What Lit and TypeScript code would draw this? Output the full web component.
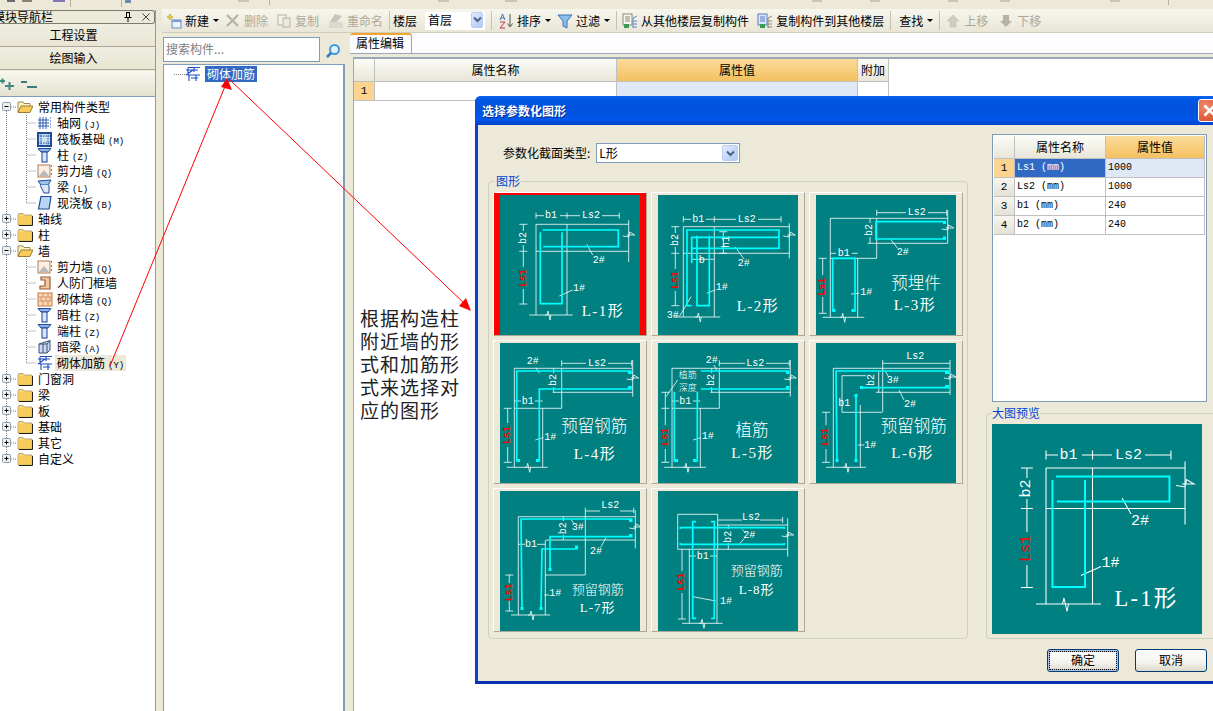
import { LitElement, html, svg, css } from 'lit';
import { customElement } from 'lit/decorators.js';

// --- diagrams: every figure is 140x140, coordinates read off the reference ---

type Txt = [number, number, string, string?];
interface Fig {
  w: string;
  c: string;
  t: Txt[];
  e?: Array<[number, number]>; // square rebar ends
}

const brkH = (x: number, y: number) => `M${x - 3} ${y}L${x - 1} ${y}L${x} ${y - 4}L${x + 2} ${y + 5}L${x + 3} ${y}`;
const brkV = (x: number, y: number) => `M${x - 6} ${y + 1}L${x} ${y + 2}L${x + 1} ${y - 3}L${x + 6} ${y}L${x - 2} ${y}`;
const tick = (x: number, y: number) => `M${x - 4} ${y}H${x + 4}`;
const vtick = (x: number, y: number) => `M${x} ${y - 3}V${y + 3}`;

const figs: Fig[] = [
  {
    w: `M36 20.7H44M60 20.7H80M102 20.7H119.3${vtick(36, 20.7)}${vtick(67, 20.7)}${vtick(119.3, 20.7)}
      M36 29.3H128.7M36 56.3H128.7M36 29.3V120M67 29.3V120M29.3 120H72.7${brkH(48, 120)}
      M128.7 25V67${brkV(128.7, 40)}M23.3 29.3V36M23.3 50V72M23.3 94V109
      ${tick(23.3, 29.3)}${tick(23.3, 56.3)}${tick(23.3, 109)}
      M86.7 49.3L92.7 60M59.3 101L72.7 95`,
    c: 'M42.7 35H118.3V51.7H43.3M40.3 37.3V108.7H62V37.3',
    t: [[51, 20.7, 'b1'], [91, 20.7, 'Ls2'], [23.3, 43, 'b2', 'r'], [23.3, 83, 'Ls1', 'R'], [98.7, 65, '2#'], [79, 93, '1#'], [81.7, 121, 'L-1形', 'lab']],
  },
  {
    w: `M25.3 24.3H33M48 24.3H78M100 24.3H123${vtick(25.3, 24.3)}${vtick(56.3, 24.3)}${vtick(123, 24.3)}
      M25.3 31.7H131.3M25.3 58.3H131.3M25.3 31.7V122M56.3 31.7V122M16.3 122H62.3${brkH(40.3, 122)}
      M131.3 28.3V63.3${brkV(131.3, 40)}M17.3 31.7V38M17.3 52V74M17.3 96V110.7
      ${tick(17.3, 31.7)}${tick(17.3, 58.3)}${tick(17.3, 110.7)}
      M65.3 36.7V58.3${tick(65.3, 36.7)}${tick(65.3, 58.3)}M33.7 64.3H56.3
      M77 51.7L86.3 64.3M48.7 98.3L57.3 95M21.3 121.7L33 101.7`,
    c: 'M33.7 110.7H29V35H121V42.3H33.7V68M39 40.7V110.7H51.3V40.7M33.7 53.3H121V43.6',
    t: [[40.3, 24.3, 'b1'], [88.7, 24.3, 'Ls2'], [17.3, 45, 'b2', 'r'], [17.3, 85, 'Ls1', 'R'], [68, 47, 'h1', 'r'], [43.7, 65, 'b'], [85.7, 68.3, '2#'], [63.7, 92.3, '1#'], [14.7, 120.3, '3#'], [78.7, 116, 'L-2形', 'lab']],
  },
  {
    w: `M60.7 17.7H90M112 17.7H130.7${vtick(60.7, 17.7)}${vtick(130.7, 17.7)}
      M14.3 23.3H131.7M14.3 23.3V122.3M60.7 23.3V63.3M14.3 63.3H60.7M51.7 48.3H131.7M41.7 63.3V122.3
      M6.7 122.3H48.3${brkH(26.7, 122.3)}M131.7 15V48.3${brkV(131.7, 33)}
      M54 23.3V28M54 42V48.3M14.3 58.3H20M36 58.3H41.7
      M6.7 63.3V80M6.7 102V118.3${tick(6.7, 63.3)}${tick(6.7, 118.3)}
      M74.3 44L81.7 53.3M35 99L43.3 98.3`,
    c: 'M130 26.7H60V44H130M18.3 116H16.7V63.3H39V116H37',
    t: [[100.7, 17.7, 'Ls2'], [53, 35, 'b2', 'r'], [27.7, 58.3, 'b1'], [6.7, 91.7, 'Ls1', 'R'], [86.7, 57.7, '2#'], [50.3, 97.3, '1#'], [100, 86.7, '预埋件', 'cn'], [99, 110, 'L-3形', 'mid']],
    e: [[16.5, 114], [35.5, 114], [127, 26], [127, 41.5]],
  },
  {
    w: `M61.7 20.3H86M108 20.3H131.7${vtick(61.7, 20.3)}${vtick(131.7, 20.3)}
      M14.3 25.3H132.7M14.3 25.3V124.3M61.7 25.3V65.3M14.3 65.3H61.7M42.7 65.3V124.3M52.7 49.3H132.7
      M6.7 124.3H47.7${brkH(27.7, 124.3)}M132.7 17V53.7${brkV(132.7, 35)}
      M53.7 25.3V30M53.7 44V49.3M14.3 58H21M35 58H42.7
      M7.7 65.3V80M7.7 104V119.3${tick(7.7, 65.3)}${tick(7.7, 119.3)}
      M36 24.7L39.3 30.3M35.3 97L43.3 94.7`,
    c: 'M18.7 118H16.7V28H131V31M37.7 118H39.3V46H131V43',
    t: [[97, 20.3, 'Ls2'], [32.7, 18.7, '2#'], [53.7, 37, 'b2', 'r'], [27.7, 58, 'b1'], [7.7, 92, 'Ls1', 'R'], [50.3, 94.3, '1#'], [94.3, 82, '预留钢筋', 'cn'], [95, 111.3, 'L-4形', 'mid']],
    e: [[17, 116], [36, 116], [128, 28], [128, 43]],
  },
  {
    w: `M61.3 20.3H87M108 20.3H131.3${vtick(61.3, 20.3)}${vtick(131.3, 20.3)}
      M14 25.3H132.3M14 25.3V124.3M61.3 25.3V65.3M14 65.3H61.3M42.3 65.3V124.3M52.3 49.3H132.3
      M6.3 124.3H48${brkH(28, 124.3)}M132.3 17V53.7${brkV(132.3, 35)}
      M53.7 25.3V30M53.7 44V49.3M14 58H21M35 58H42.3
      M7.3 49.3V82M7.3 106V119.3${tick(7.3, 49.3)}${tick(7.3, 65.3)}${tick(7.3, 119.3)}
      M8 53.7L19.7 37M56 22L59 28M35 97L43 94.7`,
    c: 'M16.3 48.7V118H19.7M39.3 48.7V118H35.3M43 28H130.7V31M43 46H130.7V43',
    t: [[97.3, 20.3, 'Ls2'], [53.7, 17, '2#'], [53.7, 37, 'b2', 'r'], [27.3, 58, 'b1'], [7.3, 93.7, 'Ls1', 'R'], [49.7, 93.7, '1#'], [29.7, 31.5, '植筋', 'sm'], [29.7, 44.5, '深度', 'sm'], [94, 86.3, '植筋', 'cn'], [94.7, 110.3, 'L-5形', 'mid']],
    e: [[17, 116], [35, 116], [128, 28], [128, 43]],
  },
  {
    w: `M66.7 20.3H134M66.7 17V69.3M134 17V52${brkV(134, 34)}
      M17.3 25.3H134M17.3 25.3V124.3M26 32.7V69.3H66M26 32.7H50M44.3 62V124.3M60 49.3H134
      M10 124.3H50${brkH(30, 124.3)}M62.7 28.7V49.3
      M10 69.3V82M10 106V119.3${tick(10, 69.3)}${tick(10, 119.3)}
      M69.3 28L72.7 34M83 47L88 57M41.7 102H48.3`,
    c: 'M21 118.7L20 28H132.3V31M45.7 44.7H132.3V42M40 52.7V118.7',
    t: [[99.3, 13, 'Ls2'], [55, 37, 'b2', 'r'], [28.3, 60.3, 'b1'], [76.7, 37, '3#'], [94, 61, '2#'], [10, 93.7, 'Ls1', 'R'], [54.3, 102, '1#'], [97.7, 82, '预留钢筋', 'cn'], [96.7, 110.3, 'L-6形', 'mid']],
    e: [[19.5, 116], [38.5, 116], [38.5, 51], [44, 43], [129, 28], [129, 42]],
  },
  {
    w: `M85.3 20H100M120 20H133.7M85.3 16.7V84M133.7 16.7V22
      M18.3 25.7H135.3M18.3 25.7V124M46 49H135.3M45.3 49V124M45.3 84H85.3
      M11 124H50.3${brkH(31, 124)}M135.3 19V57.3${brkV(135.3, 36)}
      M63.3 25.7V30M63.3 44V49M18.3 53.3H25M37 53.3H45.3
      M9.3 84V92M9.3 110V120${tick(9.3, 84)}${tick(9.3, 120)}
      M71 28.3L74.3 33.3M106 46.7L101 55.7M44.3 104H49.3`,
    c: 'M22 118L21 28H131.7V31M41 118L42 58H76.7V55M50 79V45.7H131.7V43',
    t: [[110.3, 14, 'Ls2'], [63.3, 37.3, 'b2', 'r'], [77.7, 36.7, '3#'], [31, 53.3, 'b1'], [96, 60.7, '2#'], [9.3, 101.3, 'Ls1', 'R'], [55.3, 102.3, '1#'], [97.7, 97.3, '预留钢筋', 'cn14'], [97.7, 116.7, 'L-7形', 'mid14']],
    e: [[20.5, 116], [39.5, 116], [48.5, 77], [75, 54.5], [129, 28], [129, 43]],
  },
  {
    w: `M19.7 23.3H59.7V58.3H19.7ZM59.7 58.3H129.7M59.7 34H129.7M59.7 29H84M102 29H124.7${vtick(124.7, 29)}
      M31.3 58.3V132.3M59 58.3V132.3M24 132.3H64.7${brkH(44, 132.3)}M129.7 27.3V65.7${brkV(129.7, 44)}
      M70.3 34V38M70.3 52V58.3M31.3 65H38M52 65H59
      M24 58.3V80M24 102V128${tick(24, 128)}
      M84 38.3L88 42.3M80.7 54L86.3 47.3M34.7 105.7L58 110`,
    c: 'M38 30.7H34.7V127.3H38M53 30.7H56.3V127.3H53M22.3 38V36.7H126.3V38M22.3 52V53.3H126.3V52',
    t: [[93, 26.7, 'Ls2'], [70.3, 45.7, 'b2', 'r'], [91.3, 44.7, '2#'], [44.7, 65, 'b1'], [24, 90.7, 'Ls1', 'R'], [68, 110, '1#'], [98.7, 78.3, '预留钢筋', 'cn14'], [98.7, 98, 'L-8形', 'mid14']],
  },
];

const drawFig = (f: Fig, cls = 'fig') => html`<svg class=${cls} viewBox="0 0 140 140">
  <rect width="140" height="140" fill="#008080"></rect>
  <path class="wl" d=${f.w}></path>
  <path class="cy" d=${f.c}></path>
  ${(f.e ?? []).map(([x, y]) => svg`<rect x=${x} y=${y} width="3" height="3" fill="#0ff"></rect>`)}
  ${f.t.map(([x, y, s, k]) =>
    k === 'r' || k === 'R'
      ? svg`<text class=${k === 'R' ? 'dim red' : 'dim'} x=${x} y=${y} transform="rotate(-90 ${x} ${y})">${s}</text>`
      : svg`<text class=${k ?? 'dim'} x=${x} y=${y}>${s}</text>`,
  )}
</svg>`;

// --- icons ---

const ic = (body: unknown) => html`<svg class="ic" viewBox="0 0 16 16">${body}</svg>`;
const folder = ic(svg`<path d="M1 4L2 2.500H6L7.500 4H15V14H1Z" fill="#f7d774" stroke="#9a8a55" stroke-width=".7"></path><rect x="1.500" y="5" width="13" height="8.500" fill="#f6cd5b"></rect><path d="M15.500 5V14.500H2" stroke="#222" fill="none"></path>`);
const folderOpen = ic(svg`<path d="M1 13V3H6L7 4.500H13V7" fill="#fff3c4" stroke="#9a8a55"></path><path d="M1 13.500L4 7H16L13 13.500Z" fill="#f6cd5b" stroke="#9a7a35"></path>`);
const gridIc = ic(svg`<path d="M1 5H12M1 8H12M1 11H12M3 2V14M6 2V14M9 2V14" stroke="#2a5bb0" fill="none"></path><path d="M13 3h2M13 6h2M13 9h2M13 12h2" stroke="#2a5bb0" stroke-dasharray="1 1"></path>`);
const raftIc = ic(svg`<rect x="1" y="2" width="13" height="13" fill="#cfe0f5" stroke="#1c4c96" stroke-width="2"></rect><path d="M1 5H14M1 12H14M4 2V15M11 2V15" stroke="#1c4c96" stroke-dasharray="1.500 1"></path>`);
const colIc = ic(svg`<path d="M1 1.500H14L11 5H4Z" fill="#8fb0e8" stroke="#1c4c96"></path><rect x="5" y="5" width="5" height="10" fill="#dbe6f8" stroke="#1c3c96"></rect>`);
const shearIc = ic(svg`<rect x="1" y="2" width="12" height="12" fill="#fbeee4" stroke="#b07a50"></rect><path d="M2 13L7 7L12 13Z" fill="#b9b9b9"></path><path d="M14.500 2V14" stroke="#e07010" stroke-dasharray="2 2"></path>`);
const beamIc = ic(svg`<path d="M1 2L14 1L11 6H4Z" fill="#9cc4ec" stroke="#1c4c96"></path><path d="M3 6L7 14H12V6" fill="#dbe6f8" stroke="#1c4c96"></path>`);
const slabIc = ic(svg`<path d="M4 1.500H14L12 14H1.500Z" fill="#b8d4f6" stroke="#1c4c96" stroke-width="1.200"></path>`);
const doorIc = ic(svg`<path d="M4 2H13V14H3V11H8V5H4Z" fill="#eec9a5" stroke="#9a5a30" stroke-width="1.200"></path>`);
const brickIc = ic(svg`<rect x="1" y="2" width="14" height="13" fill="#f8d8b8" stroke="#c87a40"></rect><path d="M1 6H15M1 10H15M6 2V6M11 2V6M4 6V10M9 6V10M13 6V10M6 10V15M11 10V15" stroke="#d89060" fill="none"></path>`);
const hidIc = ic(svg`<path d="M2 5L13 1.500V11L10 14H2Z" fill="#cfdcec" stroke="#38507a"></path><path d="M2 5H10V14M10 5L13 1.500M6 5V14" stroke="#38507a" fill="none"></path>`);
const rebarIc = ic(svg`<path d="M3 1.500H15M3 1.500V9H15M9 1.500V6M1 4H13M4 9V15M11 9V15M6 12H13M1 9L8 4" stroke="#1c4cc6" fill="none" stroke-width="1.100"></path>`);

const tbNew = ic(svg`<path d="M4 1L5 3L7 4L5 5L4 7L3 5L1 4L3 3Z" fill="#f0c840" stroke="#b08a20" stroke-width=".5"></path><rect x="6" y="7" width="9" height="8" fill="#eef3fb" stroke="#6a8cc0"></rect><rect x="6" y="7" width="9" height="2" fill="#7a9cd0"></rect>`);
const tbDel = ic(svg`<path d="M2 2L13 13M13 2L2 13" stroke="#b5b2a2" stroke-width="2.200"></path>`);
const tbCopy = ic(svg`<rect x="2" y="2" width="8" height="10" fill="#f4f3ea" stroke="#b5b2a2"></rect><rect x="7" y="5" width="7" height="9" fill="#ebe9dc" stroke="#b5b2a2"></rect>`);
const tbRename = ic(svg`<path d="M7 1L14 3L6 12L2 9Z" fill="#c8c6b8"></path><rect x="1" y="9" width="14" height="6" fill="#dcdacc"></rect>`);
const tbSort = ic(svg`<path d="M12 1V13M9.500 10.500L12 14L14.500 10.500" stroke="#555" fill="none"></path><path d="M2 7L4.500 1L7 7M3 5H6" stroke="#4a70b8" fill="none"></path><path d="M2 9H7L2 15H7" stroke="#b04040" fill="none"></path>`);
const tbFilter = ic(svg`<path d="M1 2H15L10 8V15L6 13V8Z" fill="#8cc0ec" stroke="#3a70b0"></path>`);
const tbCopyFrom = ic(svg`<rect x="1" y="1" width="9" height="11" fill="#f8f8f0" stroke="#88887a"></rect><path d="M3 4H8M3 6H8M3 8H8" stroke="#88887a"></path><rect x="2" y="11" width="5" height="4" fill="#3a9a50"></rect><path d="M11 5L15 3M11 8H15M11 11H15M11 14H15M11 5V15" stroke="#5a8ad0" fill="none"></path>`);
const tbCopyTo = ic(svg`<rect x="1" y="1" width="9" height="11" fill="#dce8fb" stroke="#5a7ac0"></rect><path d="M3 4H8M3 6H8M3 8H8" stroke="#5a7ac0"></path><rect x="3" y="11" width="5" height="4" fill="#3a9a50"></rect><path d="M11 5L15 3M11 8H15M11 11H15M11 14H15M11 5V15" stroke="#88887a" fill="none"></path>`);
const tbUp = ic(svg`<path d="M8 2L14 8H11V14H5V8H2Z" fill="#cfcdbf" stroke="#bdbbac" stroke-width=".5"></path>`);
const tbDown = ic(svg`<path d="M8 14L14 8H11V2H5V8H2Z" fill="#b5b3a4"></path>`);
const chevron = html`<svg class="chev" viewBox="0 0 9 7"><path d="M1 1.500L4.500 5L8 1.500" fill="none" stroke="#4d6185" stroke-width="2"></path></svg>`;

interface Node {
  label: string;
  key?: string;
  icon: unknown;
  kid?: boolean;
  open?: boolean;
  tail?: boolean; // last child of its parent
  hot?: boolean;
}

const tree: Node[] = [
  { label: '常用构件类型', icon: folderOpen, open: true },
  { label: '轴网', key: '(J)', icon: gridIc, kid: true },
  { label: '筏板基础', key: '(M)', icon: raftIc, kid: true },
  { label: '柱', key: '(Z)', icon: colIc, kid: true },
  { label: '剪力墙', key: '(Q)', icon: shearIc, kid: true },
  { label: '梁', key: '(L)', icon: beamIc, kid: true },
  { label: '现浇板', key: '(B)', icon: slabIc, kid: true, tail: true },
  { label: '轴线', icon: folder },
  { label: '柱', icon: folder },
  { label: '墙', icon: folderOpen, open: true },
  { label: '剪力墙', key: '(Q)', icon: shearIc, kid: true },
  { label: '人防门框墙', icon: doorIc, kid: true },
  { label: '砌体墙', key: '(Q)', icon: brickIc, kid: true },
  { label: '暗柱', key: '(Z)', icon: colIc, kid: true },
  { label: '端柱', key: '(Z)', icon: colIc, kid: true },
  { label: '暗梁', key: '(A)', icon: hidIc, kid: true },
  { label: '砌体加筋', key: '(Y)', icon: rebarIc, kid: true, tail: true, hot: true },
  { label: '门窗洞', icon: folder },
  { label: '梁', icon: folder },
  { label: '板', icon: folder },
  { label: '基础', icon: folder },
  { label: '其它', icon: folder },
  { label: '自定义', icon: folder },
];

const connector = (n: Node, i: number) => {
  if (n.kid) {
    return html`<svg class="conn kid" viewBox="0 0 37 16">
      <path d="M6.500 0V16" class="dot"></path>
      <path d=${n.tail ? 'M26.500 0V8H36' : 'M26.500 0V16M26.500 8H36'} class="dot"></path>
    </svg>`;
  }
  const first = i === 0;
  const last = i === tree.length - 1;
  return html`<svg class="conn" viewBox="0 0 17 16">
    <path d=${`${first ? '' : 'M6.500 0V3'}${last ? '' : 'M6.500 12V16'}M11 8H17`} class="dot"></path>
    <rect x="2.500" y="3.500" width="8" height="8" rx="1" fill="#f1efe4" stroke="#8aa0ba"></rect>
    <path d=${n.open ? 'M4.500 7.500H8.500' : 'M4.500 7.500H8.500M6.500 5.500V9.500'} stroke="#000"></path>
  </svg>`;
};

@customElement('app-root')
export class AppRoot extends LitElement {
  static styles = css`
    :host {
      display: block;
      position: relative;
      width: 1213px;
      height: 711px;
      overflow: hidden;
      background: #ece9d8;
      font: 12px/16px "Noto Sans CJK SC", "Liberation Sans", sans-serif;
      color: #000;
    }
    .k {
      font-family: "Liberation Mono", monospace;
      font-size: 9px;
      margin-left: 3px;
    }
    .ic {
      width: 16px;
      height: 16px;
      flex: none;
      display: block;
    }
    .strip {
      display: block;
      width: 1213px;
      height: 10px;
    }
    .main {
      display: flex;
      height: 701px;
    }

    /* left navigation */
    .nav {
      width: 155px;
      flex: none;
      display: flex;
      flex-direction: column;
      border-right: 1px solid #7f9db9;
    }
    .nav-title {
      height: 12px;
      flex: none;
      display: flex;
      align-items: center;
      border: 1px solid #7b7b6f;
      border-left: 0;
      border-radius: 0 3px 3px 0;
      overflow: hidden;
      line-height: 12px;
    }
    .nav-title b {
      font-weight: 400;
      margin-left: -7px;
      flex: 1;
    }
    .pin {
      width: 8px;
      height: 10px;
      margin-right: 10px;
    }
    .cross {
      width: 8px;
      height: 8px;
      margin-right: 4px;
    }
    .nav-btn {
      height: 22px;
      flex: none;
      display: flex;
      align-items: center;
      justify-content: center;
      background: linear-gradient(#f0eee1, #e8e5d3);
      border-bottom: 1px solid #aca899;
      padding-right: 8px;
    }
    .nav-tools {
      height: 25px;
      margin-top: 1px;
      flex: none;
      display: flex;
      align-items: center;
      gap: 5px;
      background: linear-gradient(#f8f7ef, #e5e2d0);
      border-bottom: 1px solid #7f9db9;
    }
    .nav-tools svg {
      width: 16px;
      height: 12px;
    }
    .tree {
      flex: 1;
      background: #fff;
      padding-top: 2px;
    }
    .row {
      height: 16px;
      display: flex;
      align-items: center;
    }
    .conn {
      width: 17px;
      height: 16px;
      flex: none;
    }
    .conn.kid {
      width: 37px;
    }
    .dot {
      fill: none;
      stroke: #808080;
      stroke-dasharray: 1 1;
    }
    .name {
      margin-left: 3px;
      padding: 0 2px;
      height: 16px;
      white-space: nowrap;
    }
    .row.kid .name {
      margin-left: 2px;
    }
    .name.hot {
      background: #ece9d8;
    }

    /* work area */
    .work {
      flex: 1;
      display: flex;
      flex-direction: column;
      padding-left: 6px;
      min-width: 0;
    }
    .toolbar {
      height: 24px;
      box-sizing: border-box;
      flex: none;
      display: flex;
      align-items: center;
      margin-top: -1px;
      padding-left: 1px;
      background: linear-gradient(#f7f6ee, #e9e6d6);
      border-bottom: 1px solid #cfccba;
      white-space: nowrap;
    }
    .tb {
      display: flex;
      align-items: center;
      gap: 3px;
      padding: 0 3px;
    }
    .tb.off {
      color: #aca899;
    }
    .tb.up1 {
      margin-left: -1px;
    }
    .tb.mv2 {
      margin-left: 2px;
    }
    .tb.mv3 {
      margin-left: 3px;
    }
    .tb.mv4 {
      margin-left: 4px;
    }
    .caret {
      width: 0;
      height: 0;
      margin-left: 1px;
      border: 3px solid transparent;
      border-top-color: #000;
      border-bottom: 0;
    }
    .sep {
      width: 1px;
      height: 19px;
      background: #c5c2b0;
      margin: 0 3px;
    }
    .floor {
      width: 60px;
      height: 18px;
      margin: 0 3px 0 8px;
      display: flex;
      align-items: center;
      justify-content: space-between;
      background: #fff;
      padding: 0 2px 2px 3px;
      box-sizing: border-box;
    }
    .dd {
      width: 12px;
      height: 16px;
      display: flex;
      align-items: center;
      justify-content: center;
      background: linear-gradient(135deg, #e1eafe, #aec8f7);
      border-radius: 2px;
      border: 1px solid #b9cdf5;
      box-sizing: border-box;
    }
    .chev {
      width: 9px;
      height: 7px;
    }
    .panes {
      flex: 1;
      display: flex;
      min-height: 0;
    }

    /* component list */
    .list-pane {
      width: 182px;
      flex: none;
      padding-left: 1px;
      display: flex;
      flex-direction: column;
    }
    .search {
      height: 23px;
      margin-top: 6px;
      flex: none;
      display: flex;
      align-items: center;
    }
    .search .box {
      width: 153px;
      height: 21px;
      padding: 0 0 2px 2px;
      box-sizing: content-box;
      display: flex;
      align-items: center;
      color: #808080;
      background: #fff;
      border: 1px solid #7f9db9;
      margin-top: -2px;
    }
    .lens {
      width: 16px;
      height: 16px;
      margin-left: 5px;
    }
    .list {
      flex: 1;
      margin-top: 2px;
      background: #fff;
      border: 1px solid #7f9db9;
      border-width: 1px 2px 0 1px;
      padding-top: 1px;
    }
    .item {
      display: flex;
      align-items: center;
      height: 16px;
      padding-left: 10px;
    }
    .item .lead {
      width: 11px;
      border-top: 1px dotted #808080;
    }
    .item .sel {
      margin-left: 4px;
      padding: 0 2px;
      background: #316ac5;
      color: #fff;
    }

    /* property pane */
    .props {
      flex: 1;
      margin-left: 5px;
      display: flex;
      flex-direction: column;
      min-width: 0;
    }
    .tabs {
      height: 20px;
      flex: none;
      background: #fdfdff;
      border-bottom: 1px solid #9aa8b9;
    }
    .tab {
      width: 62px;
      height: 20px;
      box-sizing: border-box;
      padding-left: 6px;
      border-top: 2px solid #f2a530;
      border-right: 1px solid #9aa8b9;
      border-radius: 3px 3px 0 0;
      line-height: 15px;
      background: #fdfdff;
    }
    .prop-body {
      flex: 1;
      padding: 3px 0 0 3px;
    }
    .prop-grid {
      height: 100%;
      background: #fff;
      border-top: 2px solid #9aa8b9;
      border-left: 1px solid #9aa8b9;
    }

    /* shared grid */
    .pg {
      display: grid;
    }
    .pg.big {
      grid-template-columns: 21px 242px 241px 31px;
      grid-template-rows: 23px 19px;
      width: 535px;
    }
    .pg.small {
      grid-template-columns: 21px 91px 99px;
      grid-template-rows: 23px repeat(4, 19px);
      width: 211px;
    }
    .pg > div {
      box-sizing: border-box;
      display: flex;
      align-items: center;
      border-right: 1px solid #c0c0c0;
      border-bottom: 1px solid #c0c0c0;
      padding-left: 2px;
      white-space: nowrap;
    }
    .pg .h {
      justify-content: center;
      padding: 0;
      background: linear-gradient(#fcfcf8, #e8e6d9);
    }
    .pg .h.on {
      background: linear-gradient(#fbdc9c, #f3c05f);
    }
    .pg .n {
      justify-content: center;
      padding: 0;
      background: linear-gradient(#f7f6ef, #e4e2d4);
      font-family: "Liberation Mono", monospace;
      font-size: 11px;
    }
    .pg .n.on {
      background: #fdd48f;
    }
    .pg .v {
      font-family: "Liberation Mono", monospace;
      font-size: 10px;
    }
    .pg .s {
      background: #316ac5;
      color: #fff;
    }
    .pg .a {
      background: #e0e8f5;
    }

    /* annotation text and arrows lie over the panes */
    .note {
      position: absolute;
      left: 360px;
      top: 306px;
      width: 100px;
      font-size: 19px;
      line-height: 23px;
      letter-spacing: 1px;
      color: #222;
    }
    .arrows {
      position: absolute;
      left: 0;
      top: 0;
      width: 1213px;
      height: 711px;
      pointer-events: none;
    }

    /* dialog */
    .dlg {
      position: absolute;
      left: 475px;
      top: 96px;
      width: 744px;
      height: 588px;
      box-sizing: border-box;
      display: flex;
      flex-direction: column;
      background: #ece9d8;
      border: 3px solid #0a40d0;
      border-top: 0;
      border-bottom-color: #0832b0;
      border-radius: 6px 6px 0 0;
    }
    .dlg-title {
      height: 29px;
      flex: none;
      margin: 0 -3px;
      padding: 0 0 0 7px;
      display: flex;
      align-items: center;
      justify-content: space-between;
      color: #fff;
      font-weight: 700;
      font-size: 12px;
      text-shadow: 1px 1px 0 #0a2a90;
      border-radius: 6px 6px 0 0;
      background: linear-gradient(#0a64ec 0, #0058e4 12%, #0050dc 45%, #0058ea 80%, #0040cc 100%);
    }
    .close {
      width: 21px;
      height: 21px;
      margin-right: -2px;
      border: 1px solid #fff;
      border-radius: 3px;
      background: radial-gradient(circle at 30% 30%, #ef8a70, #d6421c);
    }
    .close svg {
      display: block;
      width: 21px;
      height: 21px;
    }
    .dlg-main {
      flex: 1;
      display: flex;
      min-height: 0;
    }
    .dlg-left {
      width: 480px;
      margin-left: 10px;
      flex: none;
    }
    .dlg-form {
      display: flex;
      align-items: center;
      height: 20px;
      margin: 18px 0 12px 15px;
    }
    .combo {
      width: 144px;
      height: 20px;
      box-sizing: border-box;
      margin-left: 6px;
      padding: 0 1px 0 2px;
      display: flex;
      align-items: center;
      justify-content: space-between;
      background: #fff;
      border: 1px solid #7f9db9;
    }
    .combo .dd {
      width: 16px;
    }
    fieldset {
      margin: 0;
      padding: 0;
      min-width: 0;
      box-sizing: border-box;
      border: 1px solid #d0d0bf;
      border-radius: 4px;
    }
    legend {
      margin-left: 6px;
      padding: 0 1px;
      color: #0046d5;
      line-height: 12px;
    }
    .shapes {
      height: 464px;
      box-sizing: border-box;
    }
    .tiles {
      display: grid;
      grid-template-columns: repeat(3, 154px);
      grid-auto-rows: 144px;
      gap: 4px;
      padding: 5px 0 0 4px;
    }
    .tile {
      box-sizing: border-box;
      padding: 2px 6px 0;
      border: 1px solid;
      border-color: #fff #aca899 #aca899 #fff;
      overflow: hidden;
    }
    .tile.on {
      background: #f00;
    }
    .fig {
      display: block;
      width: 140px;
      height: 140px;
    }
    .bigfig {
      display: block;
      width: 210px;
      height: 210px;
    }
    .wl {
      fill: none;
      stroke: #fff;
      stroke-width: 0.8;
    }
    .cy {
      fill: none;
      stroke: #0ff;
      stroke-width: 1.700;
    }
    .bigfig .wl {
      stroke-width: 0.7;
    }
    .bigfig .cy {
      stroke-width: 1.300;
    }
    text {
      fill: #fff;
      font-family: "Liberation Mono", monospace;
    }
    .dim {
      font-size: 10px;
      text-anchor: middle;
      dominant-baseline: central;
    }
    .dim.red {
      fill: #f00;
      font-weight: 700;
    }
    .bigfig .dim.red {
      font-weight: 400;
    }
    .lab {
      font-family: "Liberation Serif", "Noto Sans CJK SC", serif;
      font-size: 15px;
      letter-spacing: 1.500px;
    }
    .mid,
    .mid14 {
      font-family: "Liberation Serif", "Noto Sans CJK SC", serif;
      font-size: 15px;
      letter-spacing: 1.500px;
      text-anchor: middle;
      dominant-baseline: central;
    }
    .mid14 {
      font-size: 13px;
      letter-spacing: 1px;
    }
    .cn,
    .cn14,
    .sm {
      font-family: "Noto Sans CJK SC", sans-serif;
      font-weight: 300;
      font-size: 16.500px;
      text-anchor: middle;
      dominant-baseline: central;
    }
    .cn14 {
      font-size: 13px;
    }
    .sm {
      font-size: 9px;
    }
    .dlg-right {
      flex: 1;
      margin-left: 18px;
      min-width: 0;
    }
    .sheet {
      margin: 9px 0 0 6px;
      width: 215px;
      height: 268px;
      box-sizing: border-box;
      padding: 1px;
      background: #fff;
      border: 1px solid #7f9db9;
    }
    .preview {
      height: 232px;
      margin-top: 5px;
      border-right: 0;
      border-radius: 4px 0 0 4px;
      padding: 5px 0 0 5px;
    }
    .preview legend {
      margin-left: 0;
      padding: 0;
    }
    .dlg-foot {
      height: 42px;
      flex: none;
      display: flex;
      justify-content: flex-end;
      align-items: center;
      gap: 16px;
      padding: 0 9px 0 0;
      box-sizing: border-box;
    }
    .btn {
      width: 72px;
      height: 23px;
      display: flex;
      align-items: center;
      justify-content: center;
      box-sizing: border-box;
      border: 1px solid #003c74;
      border-radius: 3px;
      background: linear-gradient(#fff, #f3f2ec 60%, #dcd8cc);
    }
    .btn.def {
      box-shadow: inset 0 0 0 2px #a9bfe3;
      outline: 1px dotted #000;
      outline-offset: -3px;
    }
  `;

  render() {
    return html`
      <svg class="strip" viewBox="0 0 1213 10">
        <rect width="1213" height="10" fill="#ece9d8"></rect>
        <path d="M70.500 0V7M121.500 0V7M269.500 0V5M1168.500 0V5" stroke="#b5b2a2"></path>
        <rect x="7" y="0" width="8" height="2" fill="#6d6d6d"></rect>
        <rect x="22" y="0" width="10" height="2" fill="#8a8272"></rect>
        <rect x="53" y="0" width="12" height="2" fill="#8078b8"></rect>
        <rect x="125" y="0" width="6" height="3" fill="#6a8ab0"></rect>
        <rect x="238" y="0" width="11" height="2" fill="#c8c6b8"></rect>
        <rect x="438" y="0" width="11" height="2" fill="#c8c6b8"></rect>
        <rect x="505" y="0" width="12" height="2" fill="#c8c6b8"></rect>
        <rect x="812" y="0" width="10" height="2" fill="#c8c6b8"></rect>
        <rect x="870" y="0" width="10" height="2" fill="#c8c6b8"></rect>
        <rect x="948" y="0" width="10" height="2" fill="#c8c6b8"></rect>
        <rect x="1000" y="0" width="10" height="2" fill="#c8c6b8"></rect>
        <rect x="1110" y="0" width="10" height="2" fill="#c8c6b8"></rect>
      </svg>
      <div class="main">
        ${this.renderNav()}
        <div class="work">
          ${this.renderToolbar()}
          <div class="panes">
            ${this.renderList()}
            <div class="props">
              <div class="tabs"><div class="tab">属性编辑</div></div>
              <div class="prop-body">
                <div class="prop-grid">
                  <div class="pg big">
                    <div class="h"></div>
                    <div class="h">属性名称</div>
                    <div class="h on">属性值</div>
                    <div class="h">附加</div>
                    <div class="n on">1</div>
                    <div></div>
                    <div class="a"></div>
                    <div></div>
                  </div>
                </div>
              </div>
            </div>
          </div>
        </div>
      </div>
      <div class="note">根据构造柱附近墙的形式和加筋形式来选择对应的图形</div>
      ${this.renderDialog()}
      <svg class="arrows" viewBox="0 0 1213 711">
        <path d="M110 366L226 84M229 79L466 305" fill="none" stroke="#f00"></path>
        <path d="M227 78L232 90L221 87Z M471 311L459 306L466 298Z" fill="#f00"></path>
      </svg>
    `;
  }

  renderNav() {
    return html`<div class="nav">
      <div class="nav-title">
        <b>模块导航栏</b>
        <svg class="pin" viewBox="0 0 8 10"><path d="M2 0.500H6M2.500 0.500V5.500M5.500 0.500V5.500M0.500 5.500H7.500M4 5.500V10" stroke="#000" fill="none"></path></svg>
        <svg class="cross" viewBox="0 0 8 8"><path d="M0.500 0.500L7.500 7.500M7.500 0.500L0.500 7.500" stroke="#444"></path></svg>
      </div>
      <div class="nav-btn">工程设置</div>
      <div class="nav-btn">绘图输入</div>
      <div class="nav-tools">
        <svg viewBox="0 0 16 12"><path d="M0 3H5M2.500 0.500V5.500M5 8H14M9.500 4V12" stroke="#3f8a80" stroke-width="2" fill="none"></path></svg>
        <svg viewBox="0 0 16 12"><path d="M0 4H6M6 9H16" stroke="#3f7a80" stroke-width="2" fill="none"></path></svg>
      </div>
      <div class="tree">
        ${tree.map(
          (n, i) => html`<div class="row ${n.kid ? 'kid' : ''}">
            ${connector(n, i)}${n.icon}
            <span class="name ${n.hot ? 'hot' : ''}">${n.label}${n.key ? html`<span class="k">${n.key}</span>` : ''}</span>
          </div>`,
        )}
      </div>
    </div>`;
  }

  renderToolbar() {
    const caret = html`<i class="caret"></i>`;
    return html`<div class="toolbar">
      <div class="tb">${tbNew}<span>新建</span>${caret}</div>
      <div class="tb off">${tbDel}<span>删除</span></div>
      <div class="tb off mv2">${tbCopy}<span>复制</span></div>
      <div class="tb off mv3">${tbRename}<span>重命名</span></div>
      <i class="sep"></i>
      <span>楼层</span>
      <div class="floor"><span>首层</span><span class="dd">${chevron}</span></div>
      <i class="sep"></i>
      <div class="tb">${tbSort}<span>排序</span>${caret}</div>
      <div class="tb">${tbFilter}<span>过滤</span>${caret}</div>
      <i class="sep"></i>
      <div class="tb up1">${tbCopyFrom}<span>从其他楼层复制构件</span></div>
      <div class="tb mv2">${tbCopyTo}<span>复制构件到其他楼层</span></div>
      <i class="sep"></i>
      <div class="tb mv2"><span>查找</span>${caret}</div>
      <i class="sep"></i>
      <div class="tb off up1">${tbUp}<span>上移</span></div>
      <div class="tb off mv4">${tbDown}<span>下移</span></div>
    </div>`;
  }

  renderList() {
    return html`<div class="list-pane">
      <div class="search">
        <div class="box">搜索构件...</div>
        <svg class="lens" viewBox="0 0 16 16"><circle cx="9.500" cy="6.500" r="4.500" fill="#e4f2fc" stroke="#3f9adf" stroke-width="2"></circle><path d="M6 10L2 14" stroke="#2f7ac0" stroke-width="2.500"></path></svg>
      </div>
      <div class="list">
        <div class="item"><i class="lead"></i>${rebarIc}<span class="sel">砌体加筋</span></div>
      </div>
    </div>`;
  }

  renderDialog() {
    const rows = [
      ['Ls1 (mm)', '1000'],
      ['Ls2 (mm)', '1000'],
      ['b1 (mm)', '240'],
      ['b2 (mm)', '240'],
    ];
    return html`<div class="dlg">
      <div class="dlg-title">
        <span>选择参数化图形</span>
        <span class="close"><svg viewBox="0 0 21 21"><path d="M5.500 5.500L15.500 15.500M15.500 5.500L5.500 15.500" stroke="#fff" stroke-width="2.500"></path></svg></span>
      </div>
      <div class="dlg-main">
        <div class="dlg-left">
          <div class="dlg-form">
            <span>参数化截面类型:</span>
            <div class="combo"><span>L形</span><span class="dd">${chevron}</span></div>
          </div>
          <fieldset class="shapes">
            <legend>图形</legend>
            <div class="tiles">
              ${figs.map((f, i) => html`<div class="tile ${i === 0 ? 'on' : ''}">${drawFig(f)}</div>`)}
            </div>
          </fieldset>
        </div>
        <div class="dlg-right">
          <div class="sheet">
            <div class="pg small">
              <div class="h"></div>
              <div class="h">属性名称</div>
              <div class="h on">属性值</div>
              ${rows.map(
                ([k, v], i) => html`
                  <div class="n ${i === 0 ? 'on' : ''}">${i + 1}</div>
                  <div class="v ${i === 0 ? 's' : ''}">${k}</div>
                  <div class="v ${i === 0 ? 'a' : ''}">${v}</div>
                `,
              )}
            </div>
          </div>
          <fieldset class="preview">
            <legend>大图预览</legend>
            ${drawFig(figs[0], 'bigfig')}
          </fieldset>
        </div>
      </div>
      <div class="dlg-foot">
        <div class="btn def">确定</div>
        <div class="btn">取消</div>
      </div>
    </div>`;
  }
}
